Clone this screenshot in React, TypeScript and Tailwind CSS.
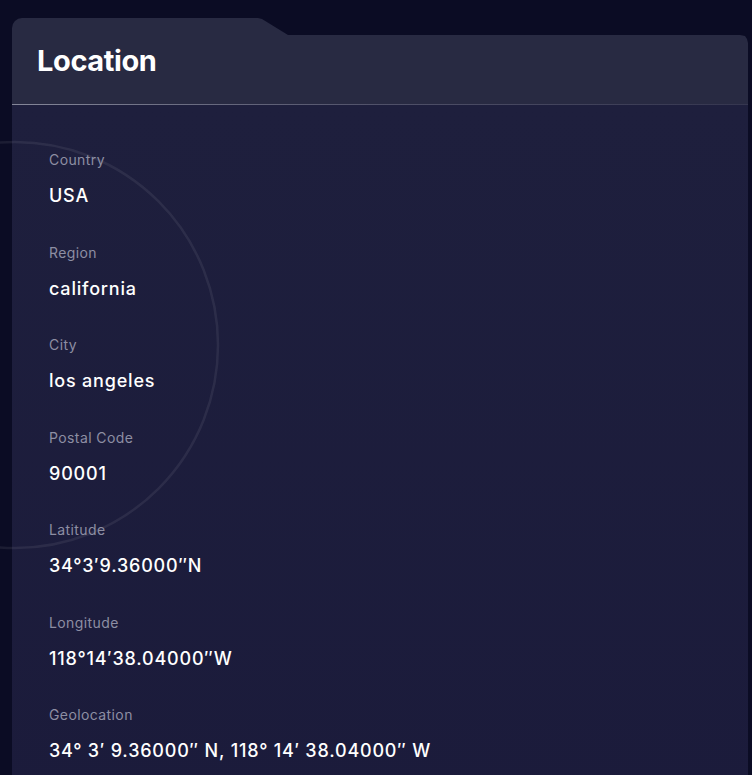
import React from 'react'

const rows = [
  { label: 'Country', value: 'USA' },
  { label: 'Region', value: 'california' },
  { label: 'City', value: 'los angeles' },
  { label: 'Postal Code', value: '90001' },
  { label: 'Latitude', value: '34°3′9.36000″N' },
  { label: 'Longitude', value: '118°14′38.04000″W' },
  { label: 'Geolocation', value: '34° 3′ 9.36000″ N, 118° 14′ 38.04000″ W' },
]

export default function App() {
  return (
    <div
      className="min-h-[775px] overflow-hidden bg-[#0b0c24] pt-[18px] pl-[12px] pr-[4px]"
      style={{ fontFamily: 'Inter, "Noto Sans", sans-serif' }}
    >
      <div className="relative min-h-[757px] w-[736px]">
        {/* header with folder tab */}
        <div className="flex h-[86px] items-center rounded-tl-[10px] bg-[#282a42] pl-[25px] [clip-path:polygon(0_0,246px_0,250px_1px,276px_17px,calc(100%-8px)_17px,calc(100%-3px)_18px,calc(100%-1px)_21px,100%_25px,100%_100%,0_100%)]">
          <h2 className="text-[29px] font-bold tracking-[-0.4px] text-white">Location</h2>
        </div>
        <div className="h-px bg-gradient-to-r from-[#858799] via-[#505169] to-[#35364f]" />

        {/* body */}
        <div className="relative min-h-[700px] bg-gradient-to-b from-[#1e1f3d] to-[#1b1b3b] pt-[45px] pl-[37px]">
          <div className="relative z-10 flex flex-col gap-y-[32.5px]">
            {rows.map((row) => (
              <div key={row.label} className="flex flex-col gap-y-[12px]">
                <span className="text-[14px] leading-[20px] tracking-[0.4px] text-[#8d8ea3]">{row.label}</span>
                <span className="text-[18px] leading-[28px] font-medium tracking-[0.8px] text-white">{row.value}</span>
              </div>
            ))}
          </div>
        </div>

        {/* decorative ring */}
        <svg
          className="pointer-events-none absolute top-[120px] left-[-212px]"
          width="440"
          height="440"
          viewBox="0 0 440 440"
        >
          <circle cx="215" cy="207" r="203" fill="none" stroke="rgba(255,255,255,0.07)" strokeWidth="2.5" />
        </svg>
      </div>
    </div>
  )
}
